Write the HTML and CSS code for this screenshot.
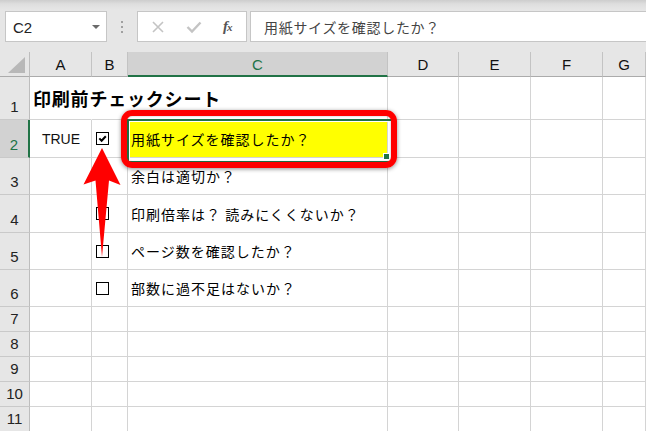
FILE: index.html
```html
<!DOCTYPE html>
<html lang="ja">
<head>
<meta charset="utf-8">
<link rel="stylesheet" href="styles.css">
</head>
<body>
<div class="app">
  <div class="fbar">
    <div class="namebox"><span class="nb-text">C2</span><span class="dd"></span></div>
    <div class="sep"><i></i><i></i><i></i></div>
    <div class="btns">
      <svg class="ico" width="14" height="14" viewBox="0 0 14 14"><path d="M2 2 L12 12 M12 2 L2 12" stroke="#c4c4c4" stroke-width="1.6" fill="none"/></svg>
      <svg class="ico" width="16" height="14" viewBox="0 0 16 14"><path d="M1.5 7 L6 11.5 L14.5 2.5" stroke="#c4c4c4" stroke-width="2.4" fill="none"/></svg>
      <span class="fx">f<small>x</small></span>
    </div>
    <div class="formula">用紙サイズを確認したか？</div>
  </div>

  <div class="sheet">
    <div class="corner"><svg width="29" height="24" viewBox="0 0 29 24"><polygon points="8,21 25,21 25,5" fill="#b8b8b8"/></svg></div>
    <div class="ch">A</div><div class="ch">B</div><div class="ch sel">C</div><div class="ch">D</div><div class="ch">E</div><div class="ch">F</div><div class="ch">G</div>

    <div class="rh">1</div><div class="c nob"><span class="title">印刷前チェックシート</span></div><div class="c nob"></div><div class="c"></div><div class="c"></div><div class="c"></div><div class="c"></div><div class="c"></div>

    <div class="rh rsel">2</div><div class="c ctr">TRUE</div><div class="c cbcell"><span class="cb"><svg width="11" height="11" viewBox="0 0 11 11"><path d="M2.3 5.4 L4.6 7.7 L8.8 3.2" stroke="#000" stroke-width="2" fill="none"/></svg></span></div><div class="c txt active">用紙サイズを確認したか？<span class="handle"></span></div><div class="c"></div><div class="c"></div><div class="c"></div><div class="c"></div>

    <div class="rh">3</div><div class="c"></div><div class="c"></div><div class="c txt">余白は適切か？</div><div class="c"></div><div class="c"></div><div class="c"></div><div class="c"></div>

    <div class="rh">4</div><div class="c"></div><div class="c cbcell"><span class="cb"></span></div><div class="c txt">印刷倍率は？ 読みにくくないか？</div><div class="c"></div><div class="c"></div><div class="c"></div><div class="c"></div>

    <div class="rh">5</div><div class="c"></div><div class="c cbcell"><span class="cb"></span></div><div class="c txt">ページ数を確認したか？</div><div class="c"></div><div class="c"></div><div class="c"></div><div class="c"></div>

    <div class="rh">6</div><div class="c"></div><div class="c cbcell"><span class="cb"></span></div><div class="c txt">部数に過不足はないか？</div><div class="c"></div><div class="c"></div><div class="c"></div><div class="c"></div>

    <div class="rh">7</div><div class="c"></div><div class="c"></div><div class="c"></div><div class="c"></div><div class="c"></div><div class="c"></div><div class="c"></div>
    <div class="rh">8</div><div class="c"></div><div class="c"></div><div class="c"></div><div class="c"></div><div class="c"></div><div class="c"></div><div class="c"></div>
    <div class="rh">9</div><div class="c"></div><div class="c"></div><div class="c"></div><div class="c"></div><div class="c"></div><div class="c"></div><div class="c"></div>
    <div class="rh">10</div><div class="c"></div><div class="c"></div><div class="c"></div><div class="c"></div><div class="c"></div><div class="c"></div><div class="c"></div>
    <div class="rh">11</div><div class="c"></div><div class="c"></div><div class="c"></div><div class="c"></div><div class="c"></div><div class="c"></div><div class="c"></div>
  </div>

  <div class="callout"></div>
  <svg class="arrow" width="646" height="431" viewBox="0 0 646 431"><polygon points="102,148 120.5,185 109,180.5 102,257 95.5,180.5 83.5,184.5" fill="#ff0000"/></svg>
</div>
</body>
</html>
```

FILE: styles.css
```css
* { box-sizing: border-box; }
html, body { margin: 0; padding: 0; }
body {
  width: 646px;
  height: 431px;
  overflow: hidden;
  background: #fff;
  font-family: "Liberation Sans", Arial, sans-serif;
}
.app {
  position: relative;
  width: 646px;
  height: 431px;
  overflow: hidden;
}

/* formula bar */
.fbar {
  height: 52px;
  display: flex;
  align-items: flex-start;
  padding: 11px 0 0 5px;
  background: linear-gradient(#cdcdcd 0px, #dedede 4px, #e6e6e6 10px, #e6e6e6 100%);
}
.namebox {
  width: 102px;
  height: 31px;
  background: #fff;
  border: 1px solid #c6c6c6;
  display: flex;
  align-items: center;
  justify-content: space-between;
  padding: 2px 6px 0 7px;
}
.nb-text {
  font-size: 15px;
  color: #222;
}
.dd {
  width: 0;
  height: 0;
  border-left: 4px solid transparent;
  border-right: 4px solid transparent;
  border-top: 4px solid #6a6a6a;
  margin-top: -2px;
}
.sep {
  width: 30px;
  height: 31px;
  display: flex;
  flex-direction: column;
  align-items: center;
  justify-content: center;
  gap: 3px;
}
.sep i {
  display: block;
  width: 2px;
  height: 2px;
  background: #a0a0a0;
}
.btns {
  width: 110px;
  height: 31px;
  background: #fff;
  border: 1px solid #c6c6c6;
  display: flex;
  align-items: center;
  padding-left: 13px;
  gap: 0;
}
.btns .ico:first-child { margin-right: 21px; }
.btns .ico:nth-child(2) { margin-right: 21px; }
.fx {
  font-family: "Liberation Serif", serif;
  font-style: italic;
  font-weight: bold;
  font-size: 15px;
  color: #555;
  letter-spacing: -1px;
}
.fx small { font-size: 11px; }
.formula {
  flex: 1;
  height: 31px;
  margin-left: 3px;
  margin-right: -2px;
  background: #fff;
  border: 1px solid #c6c6c6;
  padding: 1px 0 0 13px;
  display: flex;
  align-items: center;
  font-family: "Noto Sans CJK JP", sans-serif;
  font-size: 14px;
  letter-spacing: 0.7px;
  color: #444;
}

/* sheet grid */
.sheet {
  display: grid;
  grid-template-columns: 30px 62px 36px 260px 71px 72px 72px 1fr;
  grid-template-rows: 25px 43px 38px 37px 38px 37px 37px repeat(5, 25px);
}
.corner {
  background: #e6e6e6;
  border-right: 1px solid #bdbdbd;
  border-bottom: 1px solid #ababab;
}
.corner svg { display: block; }
.ch {
  background: #e6e6e6;
  border-right: 1px solid #c3c3c3;
  border-bottom: 1px solid #ababab;
  display: flex;
  align-items: center;
  justify-content: center;
  font-size: 15px;
  color: #111;
  padding-top: 1px;
}
.ch.sel {
  background: #d2d2d2;
  color: #217346;
  border-bottom: 2px solid #217346;
  padding-top: 2px;
}
.rh {
  background: #e6e6e6;
  border-right: 1px solid #bdbdbd;
  border-bottom: 1px solid #c9c9c9;
  display: flex;
  align-items: flex-end;
  justify-content: center;
  font-size: 15px;
  line-height: 17px;
  padding-bottom: 4px;
  color: #222;
}
.rh.rsel {
  background: #d2d2d2;
  border-right: 2px solid #217346;
  color: #217346;
}
.c {
  border-right: 1px solid #d4d4d4;
  border-bottom: 1px solid #d4d4d4;
  display: flex;
  align-items: center;
  min-width: 0;
  font-family: "Noto Sans CJK JP", sans-serif;
  font-size: 14px;
  color: #000;
}
.c.nob { border-right-color: transparent; }
.title {
  white-space: nowrap;
  font-weight: bold;
  font-size: 18px;
  letter-spacing: 0.8px;
  padding-left: 3px;
  color: #000;
}
.ctr {
  justify-content: center;
  font-family: "Liberation Sans", Arial, sans-serif;
  font-size: 14px;
  color: #111;
  padding-left: 1px;
}
.txt {
  white-space: nowrap;
  padding-left: 3px;
  letter-spacing: 1px;
}
.active {
  position: relative;
  background: #ffff00;
}
.active::after {
  content: "";
  position: absolute;
  left: -1px;
  top: -1px;
  width: 262px;
  height: 40px;
  border: 2px solid #217346;
  box-shadow: inset 0 0 0 1px #fff;
}
.handle {
  position: absolute;
  left: 255px;
  top: 33px;
  width: 7px;
  height: 7px;
  background: #217346;
  border: 1px solid #fff;
  z-index: 2;
}
.cbcell { padding-left: 4px; }
.cb {
  display: block;
  width: 13px;
  height: 13px;
  border: 1px solid #000;
  background: #fff;
}
.cb svg { display: block; }

/* overlays */
.callout {
  position: absolute;
  left: 121px;
  top: 110px;
  width: 276px;
  height: 58px;
  border: 6px solid #ff0000;
  border-radius: 11px;
  box-shadow: 0 1px 4px rgba(0,0,0,0.45), inset 0 0 2px rgba(0,0,0,0.3);
  z-index: 5;
}
.arrow {
  position: absolute;
  left: 0;
  top: 0;
  z-index: 6;
  pointer-events: none;
}
```
